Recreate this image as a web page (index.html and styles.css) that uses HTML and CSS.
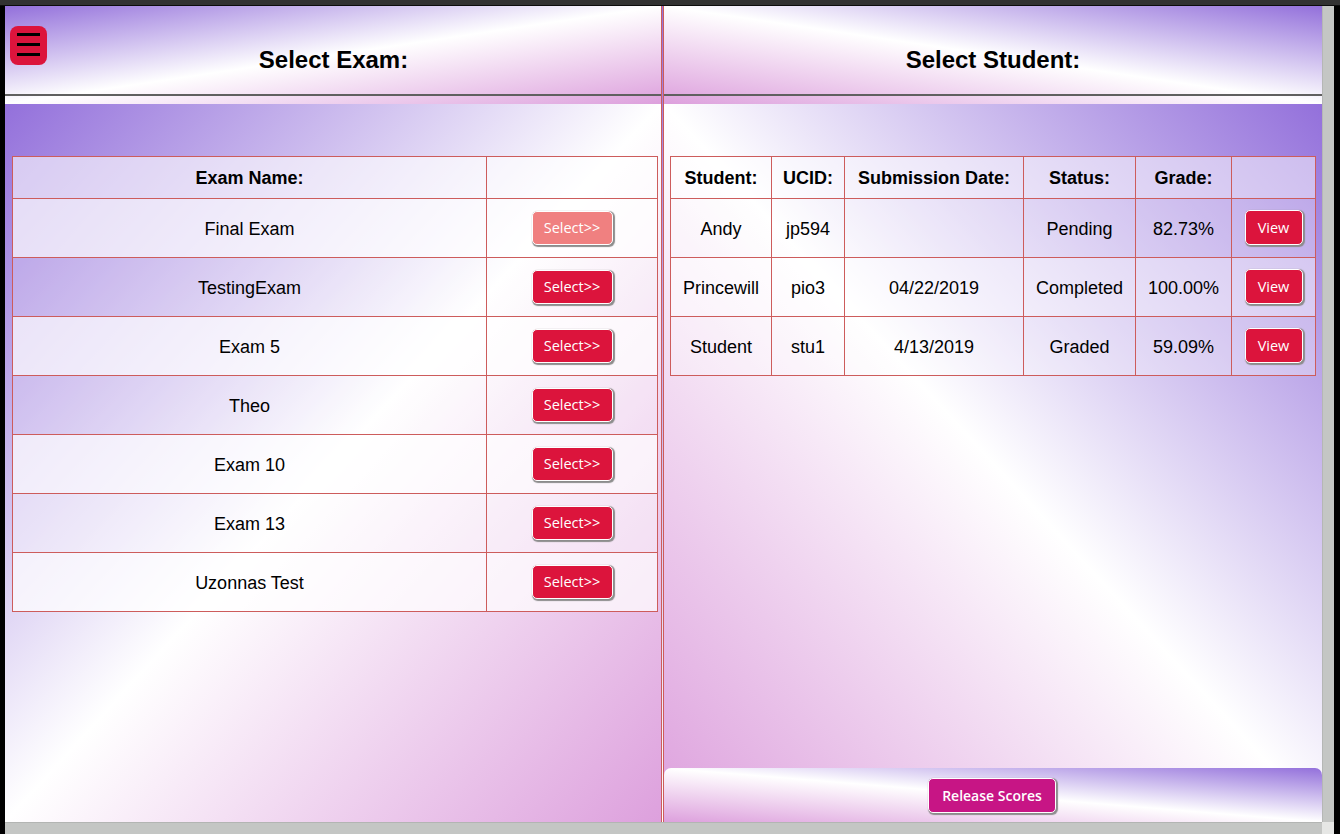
FILE: index.html
```html
<!DOCTYPE html>
<html lang="en">
<head>
<meta charset="utf-8">
<title>Grade Exams</title>
<link rel="stylesheet" href="styles.css">
</head>
<body>
<div class="window">
  <div class="topbar"></div>
  <div class="middle">
    <div class="edge-left"></div>
    <main class="content">
      <section class="panel panel-exams">
        <button class="menu-btn" aria-label="Menu"><span></span><span></span><span></span></button>
        <header class="panel-head head-left">
          <h2>Select Exam:</h2>
          <div class="rule"></div>
        </header>
        <div class="panel-body body-left">
          <table class="grid exams">
            <tr class="row-head">
              <th class="c-name">Exam Name:</th>
              <th class="c-act"></th>
            </tr>
            <tr class="row-light"><td>Final Exam</td><td><button class="btn-select active">Select&gt;&gt;</button></td></tr>
            <tr class="row-dark"><td>TestingExam</td><td><button class="btn-select">Select&gt;&gt;</button></td></tr>
            <tr class="row-light"><td>Exam 5</td><td><button class="btn-select">Select&gt;&gt;</button></td></tr>
            <tr class="row-dark"><td>Theo</td><td><button class="btn-select">Select&gt;&gt;</button></td></tr>
            <tr class="row-light"><td>Exam 10</td><td><button class="btn-select">Select&gt;&gt;</button></td></tr>
            <tr class="row-mid"><td>Exam 13</td><td><button class="btn-select">Select&gt;&gt;</button></td></tr>
            <tr class="row-light"><td>Uzonnas Test</td><td><button class="btn-select">Select&gt;&gt;</button></td></tr>
          </table>
        </div>
      </section>
      <div class="gap"></div>
      <section class="panel panel-students">
        <header class="panel-head head-right">
          <h2>Select Student:</h2>
          <div class="rule"></div>
        </header>
        <div class="panel-body body-right">
          <table class="grid students">
            <tr class="row-head">
              <th class="c-student">Student:</th>
              <th class="c-ucid">UCID:</th>
              <th class="c-date">Submission Date:</th>
              <th class="c-status">Status:</th>
              <th class="c-grade">Grade:</th>
              <th class="c-view"></th>
            </tr>
            <tr class="row-dark"><td>Andy</td><td>jp594</td><td></td><td>Pending</td><td>82.73%</td><td><button class="btn-view">View</button></td></tr>
            <tr class="row-light"><td>Princewill</td><td>pio3</td><td>04/22/2019</td><td>Completed</td><td>100.00%</td><td><button class="btn-view">View</button></td></tr>
            <tr class="row-dark"><td>Student</td><td>stu1</td><td>4/13/2019</td><td>Graded</td><td>59.09%</td><td><button class="btn-view">View</button></td></tr>
          </table>
          <footer class="panel-foot">
            <button class="btn-release">Release Scores</button>
          </footer>
        </div>
      </section>
    </main>
    <div class="vscroll"></div>
    <div class="edge-right"></div>
  </div>
  <div class="bottombar">
    <div class="edge-left"></div>
    <div class="hscroll"></div>
    <div class="corner"></div>
    <div class="edge-right"></div>
  </div>
</div>
</body>
</html>
```

FILE: styles.css
```css
* { box-sizing: border-box; }

html, body {
  margin: 0;
  padding: 0;
  background: #000;
}

body {
  font-family: "Liberation Sans", Arial, sans-serif;
  color: #000;
}

.window {
  width: 1340px;
  height: 834px;
  display: flex;
  flex-direction: column;
  overflow: hidden;
}

.topbar {
  height: 6px;
  flex: none;
  background: #323232;
  border-bottom: 1px solid #0c0c0c;
}

.middle {
  display: flex;
  height: 816px;
  flex: none;
}

.edge-left {
  width: 5px;
  flex: none;
  background: #000;
}

.edge-right {
  width: 6px;
  flex: none;
  background: #000;
}

.vscroll {
  width: 12px;
  flex: none;
  background: #c4c6c4;
  border-left: 1px solid #b5b7b5;
}

.bottombar {
  display: flex;
  height: 12px;
  flex: none;
}

.hscroll {
  width: 1317px;
  flex: none;
  background: #c4c6c4;
  border-top: 1px solid #b3b5b3;
}

.corner {
  width: 12px;
  flex: none;
  background: #e6e7e5;
}

.content {
  width: 1317px;
  flex: none;
  display: flex;
  background: linear-gradient(to bottom, #9370db, #ffffff);
}

.gap {
  width: 1px;
  flex: none;
}

.panel {
  position: relative;
  display: flex;
  flex-direction: column;
}

.panel-exams {
  width: 657px;
  border-right: 1px solid #cd5c5c;
}

.panel-students {
  width: 659px;
  border-left: 1px solid #cd5c5c;
}

.panel-head {
  height: 98px;
  flex: none;
  padding-top: 40px;
}

.head-left {
  background: linear-gradient(to bottom right, #9370db 0%, #ffffff 50%, #dda0dd 100%);
}

.head-right {
  background: linear-gradient(to bottom left, #9370db 0%, #ffffff 50%, #dda0dd 100%);
}

.panel-head h2 {
  margin: 0;
  height: 28px;
  line-height: 28px;
  font-size: 24px;
  font-weight: bold;
  text-align: center;
}

.head-left h2 { padding-left: 1px; }

.rule {
  margin-top: 20px;
  height: 2px;
  background: #606060;
}

.panel-body {
  flex: 1;
  display: flex;
  flex-direction: column;
  padding-top: 52px;
}

.body-left {
  background: linear-gradient(to bottom right, #9370db 0%, #ffffff 50%, #dda0dd 100%);
}

.body-right {
  background: linear-gradient(to bottom left, #9370db 0%, #ffffff 50%, #dda0dd 100%);
}

.menu-btn {
  position: absolute;
  left: 5px;
  top: 20px;
  width: 37px;
  height: 39px;
  padding: 7px 0 0;
  border: none;
  border-radius: 8px;
  background: #dc143c;
  display: flex;
  flex-direction: column;
  align-items: center;
  gap: 7px;
}

.menu-btn span {
  display: block;
  width: 23px;
  height: 3px;
  background: #000;
}

.grid {
  border-collapse: collapse;
  table-layout: fixed;
  width: 645px;
  font-size: 18px;
}

.exams { margin-left: 7px; }
.students { margin-left: 6px; }

.grid th,
.grid td {
  border: 1px solid #cd5c5c;
  padding: 0;
  text-align: center;
  vertical-align: middle;
}

.grid th {
  height: 42px;
  padding-top: 2px;
  font-weight: bold;
}

.grid td {
  height: 59px;
  padding-top: 2px;
}

.row-head { background: rgba(255, 255, 255, 0.6); }
.row-light { background: rgba(255, 255, 255, 0.72); }
.row-dark { background: rgba(255, 255, 255, 0.22); }
.row-mid { background: rgba(255, 255, 255, 0.45); }

.students .row-light { background: rgba(255, 255, 255, 0.5); }
.students .row-dark { background: rgba(255, 255, 255, 0.3); }
.students .row-head { background: rgba(255, 255, 255, 0.5); }

.c-name { width: 474px; }
.c-act { width: 171px; }

.c-student { width: 101px; }
.c-ucid { width: 73px; }
.c-date { width: 179px; }
.c-status { width: 112px; }
.c-grade { width: 96px; }
.c-view { width: 84px; }

.btn-select,
.btn-view,
.btn-release {
  font-family: "Open Sans", "Noto Sans", sans-serif;
  color: #fff;
  border: 1px solid #fff;
  border-radius: 5px;
  box-shadow: 1px 1px 1px 1px #8c8c8c;
  cursor: pointer;
}

.btn-select {
  display: block;
  width: 81px;
  height: 34px;
  margin: -3px auto 0;
  font-size: 14.5px;
  background: #dc143c;
  padding: 0;
}

.btn-select.active {
  background: #f08080;
}

.btn-view {
  display: block;
  width: 58px;
  height: 35px;
  margin: -4px auto 0;
  font-size: 14.5px;
  background: #dc143c;
  padding: 0;
}

.panel-foot {
  margin-top: auto;
  height: 54px;
  border-radius: 7px 7px 0 0;
  background: linear-gradient(to bottom left, #9370db 0%, #ffffff 50%, #dda0dd 100%);
  display: flex;
  align-items: center;
  justify-content: center;
}

.btn-release {
  width: 128px;
  height: 35px;
  margin-right: 2px;
  font-size: 14px;
  font-weight: 600;
  background: #c71585;
  padding: 0;
}
```
